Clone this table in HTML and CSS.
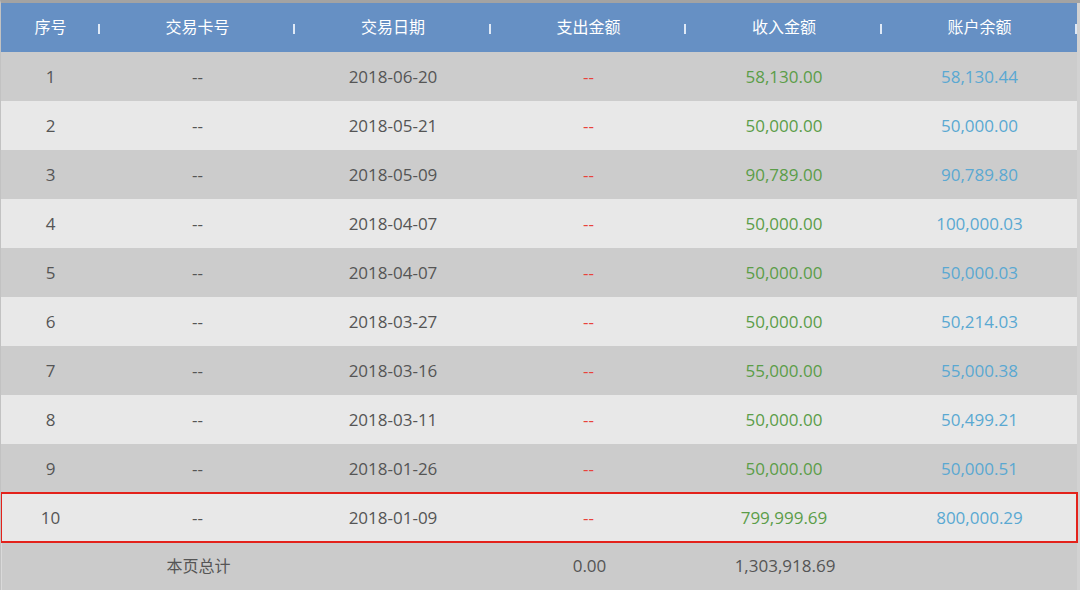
FILE: index.html
```html
<!DOCTYPE html>
<html lang="zh-CN">
<head>
    <meta charset="UTF-8">
    <title>交易明细</title>
    <link rel="stylesheet" href="styles.css">
</head>
<body>

    <div class="frame">
        <!-- Header -->
        <div class="row head">
            <div class="cell">序号</div>
            <div class="cell">交易卡号</div>
            <div class="cell">交易日期</div>
            <div class="cell">支出金额</div>
            <div class="cell">收入金额</div>
            <div class="cell">账户余额</div>
        </div>

        <!-- Rows -->
        <div class="row dark">
            <div class="cell">1</div><div class="cell">--</div><div class="cell">2018-06-20</div>
            <div class="cell out">--</div><div class="cell in">58,130.00</div><div class="cell bal">58,130.44</div>
        </div>
        <div class="row light">
            <div class="cell">2</div><div class="cell">--</div><div class="cell">2018-05-21</div>
            <div class="cell out">--</div><div class="cell in">50,000.00</div><div class="cell bal">50,000.00</div>
        </div>
        <div class="row dark">
            <div class="cell">3</div><div class="cell">--</div><div class="cell">2018-05-09</div>
            <div class="cell out">--</div><div class="cell in">90,789.00</div><div class="cell bal">90,789.80</div>
        </div>
        <div class="row light">
            <div class="cell">4</div><div class="cell">--</div><div class="cell">2018-04-07</div>
            <div class="cell out">--</div><div class="cell in">50,000.00</div><div class="cell bal">100,000.03</div>
        </div>
        <div class="row dark">
            <div class="cell">5</div><div class="cell">--</div><div class="cell">2018-04-07</div>
            <div class="cell out">--</div><div class="cell in">50,000.00</div><div class="cell bal">50,000.03</div>
        </div>
        <div class="row light">
            <div class="cell">6</div><div class="cell">--</div><div class="cell">2018-03-27</div>
            <div class="cell out">--</div><div class="cell in">50,000.00</div><div class="cell bal">50,214.03</div>
        </div>
        <div class="row dark">
            <div class="cell">7</div><div class="cell">--</div><div class="cell">2018-03-16</div>
            <div class="cell out">--</div><div class="cell in">55,000.00</div><div class="cell bal">55,000.38</div>
        </div>
        <div class="row light">
            <div class="cell">8</div><div class="cell">--</div><div class="cell">2018-03-11</div>
            <div class="cell out">--</div><div class="cell in">50,000.00</div><div class="cell bal">50,499.21</div>
        </div>
        <div class="row dark">
            <div class="cell">9</div><div class="cell">--</div><div class="cell">2018-01-26</div>
            <div class="cell out">--</div><div class="cell in">50,000.00</div><div class="cell bal">50,000.51</div>
        </div>
        <div class="row light marked">
            <div class="cell">10</div><div class="cell">--</div><div class="cell">2018-01-09</div>
            <div class="cell out">--</div><div class="cell in">799,999.69</div><div class="cell bal">800,000.29</div>
        </div>

        <!-- Page total -->
        <div class="row total">
            <div class="cell"></div><div class="cell cn">本页总计</div><div class="cell"></div>
            <div class="cell">0.00</div><div class="cell">1,303,918.69</div><div class="cell"></div>
        </div>
    </div>

</body>
</html>
```

FILE: styles.css
```css
body {
    margin: 0;
    font-family: "Open Sans", "Noto Sans CJK SC", sans-serif;
    font-size: 17px;
    color: #555;
}
.frame {
    width: 1080px;
    height: 590px;
    box-sizing: border-box;
    border-top: 3px solid #a3a3a3;
    border-left: 1px solid #c2c2c2;
    padding-right: 3px;
    background: #d2d2d2;
    overflow: hidden;
}
.row {
    display: grid;
    grid-template-columns: 99px 195px 196px 195px 196px 1fr;
    height: 49px;
    align-items: center;
    text-align: center;
}
.cell {
    position: relative;
    line-height: 49px;
}
.head {
    background: #6690c4;
    color: #fff;
    font-size: 16px;
}
.head .cell::after {
    content: "";
    position: absolute;
    right: 0;
    top: 21px;
    width: 2px;
    height: 10px;
    background: #dfe9f6;
}
.dark {
    background: #cccccc;
}
.light {
    background: #e8e8e8;
}
.total {
    background: #cbcbcb;
    height: 48px;
    border-left: 1px solid #dadada;
}
.total .cell {
    line-height: 48px;
}
.cn {
    font-size: 16px;
}
.marked {
    outline: 2px solid #e3221b;
    outline-offset: -1px;
}
.out {
    color: #e8423a;
}
.in {
    color: #5b9d48;
}
.bal {
    color: #5aa8d2;
}
```
